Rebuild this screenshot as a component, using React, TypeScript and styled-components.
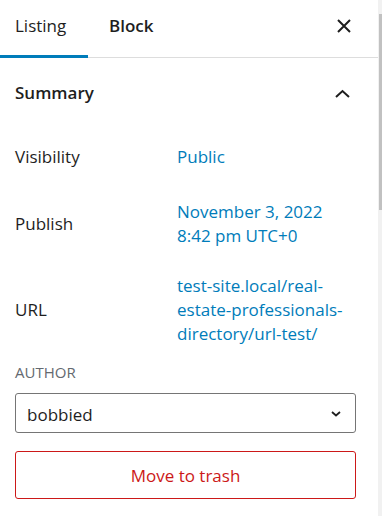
import React from 'react';
import styled, { createGlobalStyle } from 'styled-components';

const GlobalStyle = createGlobalStyle`
  html, body {
    margin: 0;
    padding: 0;
    background: #ffffff;
  }
  body {
    font-family: "Open Sans", "Noto Sans", sans-serif;
    color: #1e1e1e;
  }
`;

const Sidebar = styled.div`
  position: relative;
  width: 382px;
  height: 516px;
  overflow: hidden;
  background: #fff;
  padding-right: 4px;
  box-sizing: border-box;
`;

const Header = styled.div`
  display: flex;
  align-items: stretch;
  height: 58px;
  border-bottom: 1px solid #dddddd;
  box-sizing: border-box;
`;

const Tab = styled.button<{ $active?: boolean; $width: number; $pad: number }>`
  width: ${(p) => p.$width}px;
  border: none;
  background: none;
  padding: 0 0 8px ${(p) => p.$pad}px;
  text-align: left;
  font-family: inherit;
  font-size: 17px;
  font-weight: ${(p) => (p.$active ? 400 : 600)};
  color: #1e1e1e;
  box-shadow: ${(p) => (p.$active ? 'inset 0 -3px 0 #007cba' : 'none')};
  margin-bottom: -1px;
  cursor: pointer;
`;

const CloseButton = styled.button`
  margin-left: auto;
  width: 48px;
  border: none;
  background: none;
  display: flex;
  align-items: center;
  justify-content: center;
  padding: 0 0 6px 0;
  margin-right: 10px;
  cursor: pointer;
`;

const PanelHeader = styled.div`
  display: flex;
  align-items: center;
  justify-content: space-between;
  padding: 23px 28px 23px 15px;
  font-size: 17px;
  line-height: 24px;
  font-weight: 600;
`;

const PanelBody = styled.div`
  padding: 5px 22px 0 15px;
`;

const Rows = styled.div`
  display: flex;
  flex-direction: column;
`;

const Row = styled.div<{ $space: number }>`
  display: flex;
  align-items: center;
  min-height: 48px;
  margin-top: ${(p) => p.$space}px;
`;

const Label = styled.span`
  width: 162px;
  flex-shrink: 0;
  font-size: 17px;
  line-height: 24px;
`;

const Value = styled.a`
  font-size: 17px;
  line-height: 24px;
  color: #007cba;
  text-decoration: none;
  max-width: 168px;
`;

const SectionLabel = styled.div`
  margin-top: 17px;
  font-size: 15px;
  line-height: 18px;
  font-weight: 500;
  text-transform: uppercase;
  color: #646970;
`;

const SelectBox = styled.div`
  margin-top: 12px;
  height: 40px;
  border: 1px solid #757575;
  border-radius: 3px;
  display: flex;
  align-items: center;
  justify-content: space-between;
  padding: 2px 14px 0 11px;
  box-sizing: border-box;
  font-size: 17px;
`;

const TrashButton = styled.button`
  margin-top: 18px;
  width: 100%;
  height: 48px;
  border: 1px solid #cc1818;
  border-radius: 3px;
  background: #fff;
  color: #cc1818;
  font-family: inherit;
  font-size: 17px;
  padding-top: 2px;
  cursor: pointer;
`;

const ScrollTrack = styled.div`
  position: absolute;
  top: 0;
  right: 0;
  width: 4px;
  height: 100%;
  background: #f1f1f1;
`;

const ScrollThumb = styled.div`
  position: absolute;
  top: 14px;
  right: 0;
  width: 3px;
  height: 196px;
  background: #c1c1c1;
`;

const App: React.FC = () => (
  <>
    <GlobalStyle />
    <Sidebar>
      <Header>
        <Tab $active $width={88} $pad={15}>Listing</Tab>
        <Tab $width={90} $pad={21}>Block</Tab>
        <CloseButton aria-label="Close settings">
          <svg width="14" height="14" viewBox="0 0 14 14">
            <path d="M1 1L13 13M13 1L1 13" stroke="#1e1e1e" strokeWidth="2" />
          </svg>
        </CloseButton>
      </Header>
      <PanelHeader>
        <span>Summary</span>
        <svg width="15" height="9" viewBox="0 0 15 9">
          <path d="M1 8L7.5 2L14 8" fill="none" stroke="#1e1e1e" strokeWidth="2" />
        </svg>
      </PanelHeader>
      <PanelBody>
        <Rows>
          <Row $space={0}>
            <Label>Visibility</Label>
            <Value href="#">Public</Value>
          </Row>
          <Row $space={19}>
            <Label>Publish</Label>
            <Value href="#">
              November 3, 2022
              <br />
              8:42 pm UTC+0
            </Value>
          </Row>
          <Row $space={26}>
            <Label>URL</Label>
            <Value href="#">test-site.local/real-estate-professionals-directory/url-test/</Value>
          </Row>
        </Rows>
        <SectionLabel>Author</SectionLabel>
        <SelectBox>
          <span>bobbied</span>
          <svg width="10" height="6" viewBox="0 0 10 6">
            <path d="M1 1L5 4.5L9 1" fill="none" stroke="#1e1e1e" strokeWidth="1.8" />
          </svg>
        </SelectBox>
        <TrashButton>Move to trash</TrashButton>
      </PanelBody>
      <ScrollTrack />
      <ScrollThumb />
    </Sidebar>
  </>
);

export default App;
